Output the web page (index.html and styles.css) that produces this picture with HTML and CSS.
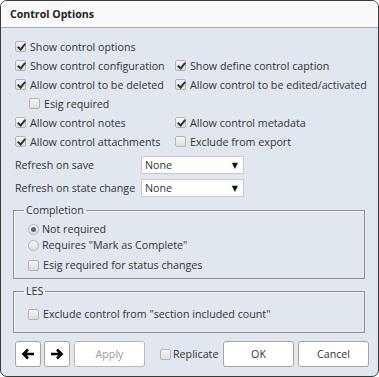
FILE: index.html
```html
<!DOCTYPE html>
<html>
<head>
<meta charset="utf-8">
<link rel="stylesheet" href="styles.css">
</head>
<body>
<div class="dialog">
  <div class="titlebar">Control Options</div>
  <div class="content">
    <div class="opts">
      <label class="row full"><span class="cb on"></span>Show control options</label>
      <label class="row"><span class="cb on"></span>Show control configuration</label>
      <label class="row"><span class="cb on"></span>Show define control caption</label>
      <label class="row"><span class="cb on"></span>Allow control to be deleted</label>
      <label class="row"><span class="cb on"></span>Allow control to be edited/activated</label>
      <label class="row full indent"><span class="cb"></span>Esig required</label>
      <label class="row"><span class="cb on"></span>Allow control notes</label>
      <label class="row"><span class="cb on"></span>Allow control metadata</label>
      <label class="row"><span class="cb on"></span>Allow control attachments</label>
      <label class="row"><span class="cb"></span>Exclude from export</label>
    </div>
    <div class="refresh">
      <span class="lbl">Refresh on save</span>
      <div class="select"><span>None</span><span class="caret">&#9660;</span></div>
      <span class="lbl">Refresh on state change</span>
      <div class="select"><span>None</span><span class="caret">&#9660;</span></div>
    </div>
    <fieldset class="group completion">
      <legend>Completion</legend>
      <label class="rrow"><span class="radio on"></span>Not required</label>
      <label class="rrow"><span class="radio"></span>Requires "Mark as Complete"</label>
      <label class="row esig"><span class="cb"></span>Esig required for status changes</label>
    </fieldset>
    <fieldset class="group les">
      <legend>LES</legend>
      <label class="row"><span class="cb"></span>Exclude control from "section included count"</label>
    </fieldset>
    <div class="footer">
      <button class="btn arrow" type="button"><svg width="14" height="12" viewBox="0 0 14 12"><path d="M13 6H3M7 1.5L2.5 6L7 10.5" fill="none" stroke="#000" stroke-width="2.6" stroke-linejoin="miter"/></svg></button>
      <button class="btn arrow" type="button"><svg width="14" height="12" viewBox="0 0 14 12"><path d="M1 6H11M7 1.5L11.5 6L7 10.5" fill="none" stroke="#000" stroke-width="2.6" stroke-linejoin="miter"/></svg></button>
      <button class="btn wide disabled" type="button">Apply</button>
      <label class="replicate"><span class="cb"></span>Replicate</label>
      <button class="btn wide ok" type="button">OK</button>
      <button class="btn wide" type="button">Cancel</button>
    </div>
  </div>
</div>
</body>
</html>
```
FILE: styles.css
```css
* { box-sizing: border-box; }
html, body { margin: 0; padding: 0; background: #fff; }
body {
  font-family: "Open Sans", "DejaVu Sans", sans-serif;
  font-size: 10.7px;
  color: #333;
}
.dialog {
  width: 379px;
  height: 377px;
  border: 1px solid #3a3a3a;
  border-radius: 7px;
  overflow: hidden;
  background: #e1e7ef;
  display: flex;
  flex-direction: column;
}
.titlebar {
  height: 27px;
  flex: none;
  background: #f9f9f9;
  border-bottom: 1px solid #a9a9a9;
  font-weight: bold;
  font-size: 10.6px;
  color: #222;
  padding-left: 9px;
  line-height: 27px;
}
.content {
  padding: 9px 13px 0 12px;
}
.opts {
  display: grid;
  grid-template-columns: 160px auto;
  margin-left: 2px;
}
.row {
  display: flex;
  align-items: center;
  height: 19px;
  white-space: nowrap;
}
.row.full { grid-column: 1 / 3; }
.row.indent { padding-left: 14px; }
.cb {
  width: 11px;
  height: 11px;
  flex: none;
  border: 1px solid #b3b3b3;
  border-radius: 2px;
  background: linear-gradient(#f6f6f6, #dedede);
  margin-right: 4px;
  position: relative;
}
.cb.on::after {
  content: "";
  position: absolute;
  left: 3px;
  top: 0px;
  width: 3px;
  height: 6px;
  border: solid #333;
  border-width: 0 2px 2px 0;
  transform: rotate(40deg);
}
.refresh {
  display: grid;
  grid-template-columns: 126px 103px;
  grid-auto-rows: 23px;
  align-items: center;
  margin: 2px 0 0 2px;
}
.select {
  height: 18px;
  background: #fff;
  border: 1px solid #c9c9c9;
  display: flex;
  align-items: center;
  justify-content: space-between;
  padding: 0 5px 0 3px;
  color: #333;
}
.caret { font-size: 8px; color: #111; }
.group {
  margin: 4px 0 0 0;
  padding: 3px 10px 3px 14px;
  border: 1px solid #8f8f8f;
  box-shadow: inset 1px 1px 0 #f4f6f9;
}
.group legend {
  padding: 0 2px;
  margin-left: -4px;
  line-height: 15px;
  color: #333;
}
.rrow {
  display: flex;
  align-items: center;
  height: 16px;
}
.radio {
  width: 11px;
  height: 11px;
  flex: none;
  border: 1px solid #b3b3b3;
  border-radius: 50%;
  background: linear-gradient(#f6f6f6, #dedede);
  margin-right: 3px;
  position: relative;
}
.radio.on::after {
  content: "";
  position: absolute;
  left: 2px;
  top: 2px;
  width: 5px;
  height: 5px;
  border-radius: 50%;
  background: #666;
}
.esig { margin-top: 2px; height: 20px; }
.les { margin-top: 5px; padding-top: 5px; padding-bottom: 8px; }
.les .row { height: 20px; }
.footer {
  display: flex;
  align-items: center;
  margin: 8px 0 0 2px;
  height: 26px;
}
.footer > * { flex: none; }
.btn {
  height: 26px;
  background: #fff;
  border: 1px solid #a4a4a4;
  border-radius: 3px;
  font-family: inherit;
  font-size: 10.7px;
  color: #333;
  padding: 0;
  display: flex;
  align-items: center;
  justify-content: center;
}
.btn.arrow { width: 26px; margin-right: 3px; }
.btn.arrow + .btn.arrow { margin-right: 4px; }
.btn.wide { width: 71px; }
.btn.disabled { color: #9a9a9a; border-color: #b8b8b8; }
.btn.ok { margin-right: 4px; }
.replicate {
  display: flex;
  align-items: center;
  margin-left: 15px;
  width: 63px;
  color: #333;
}
.replicate .cb { margin-right: 2px; }
```
